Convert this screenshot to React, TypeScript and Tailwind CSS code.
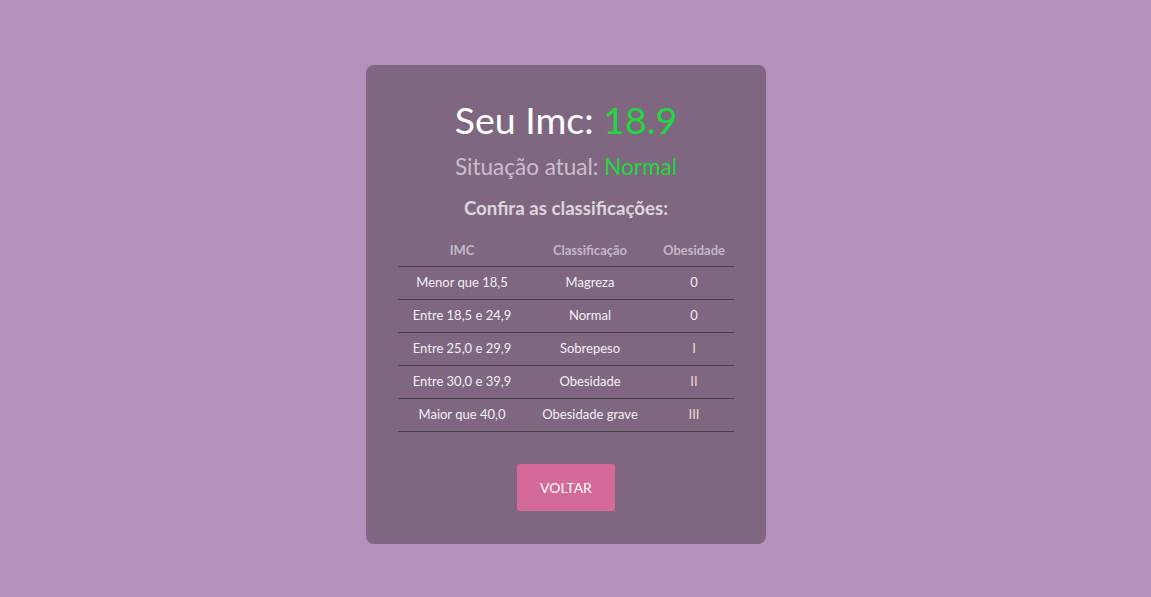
const rows = [
  { imc: "Menor que 18,5", cls: "Magreza", ob: "0" },
  { imc: "Entre 18,5 e 24,9", cls: "Normal", ob: "0" },
  { imc: "Entre 25,0 e 29,9", cls: "Sobrepeso", ob: "I" },
  { imc: "Entre 30,0 e 39,9", cls: "Obesidade", ob: "II" },
  { imc: "Maior que 40,0", cls: "Obesidade grave", ob: "III" },
];

export default function App() {
  return (
    <div
      className="min-h-[597px] w-full bg-[#b491bb] flex justify-center pt-[65px] pr-[19px]"
      style={{ fontFamily: "Lato, 'Open Sans', sans-serif" }}
    >
      <div className="w-[400px] h-[479px] bg-[#7f6782] rounded-lg px-8 pt-[32px] flex flex-col items-center">
        <h1 className="text-[37.5px] leading-[46px] text-white">
          Seu Imc: <span className="text-[#22d83c]">18.9</span>
        </h1>
        <h2 className="text-[22.5px] leading-[30px] mt-[9px] text-[#c9bfca]">
          Situação atual: <span className="text-[#22d83c]">Normal</span>
        </h2>
        <h3 className="text-[18.7px] leading-[24px] mt-[14px] font-bold text-[#dcd6dc]">
          Confira as classificações:
        </h3>
        <table className="w-[336px] mt-[12px] text-[13px] border-collapse">
          <thead>
            <tr className="border-b border-[#454245] text-[13px] font-bold text-[#c4b7c6]">
              <th className="w-[128px] h-[34px] pt-[3px] font-bold">IMC</th>
              <th className="w-[128px] pt-[3px] font-bold">Classificação</th>
              <th className="w-[80px] pt-[3px] font-bold">Obesidade</th>
            </tr>
          </thead>
          <tbody>
            {rows.map((r) => (
              <tr key={r.imc} className="border-b border-[#454245] text-[#f2eef2]">
                <td className="h-[33px] text-center">{r.imc}</td>
                <td className="text-center">{r.cls}</td>
                <td className={`text-center ${r.ob === "0" ? "text-[#f2eef2]" : "text-[#f4d6c8]"}`}>{r.ob}</td>
              </tr>
            ))}
          </tbody>
        </table>
        <button className="mt-[32px] w-[98px] h-[47px] bg-[#d36a97] rounded-[3px] text-white text-[14px]">
          VOLTAR
        </button>
      </div>
    </div>
  );
}
